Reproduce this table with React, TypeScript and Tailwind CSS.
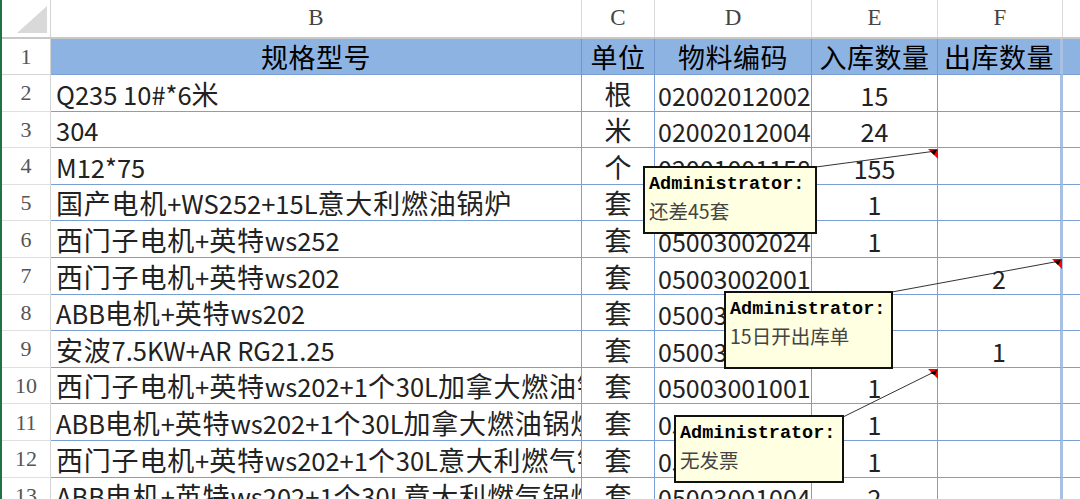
const rows: { b: string; c: string; d: string; e: string; f: string }[] = [
  { b: "Q235 10#*6米", c: "根", d: "02002012002", e: "15", f: "" },
  { b: "304", c: "米", d: "02002012004", e: "24", f: "" },
  { b: "M12*75", c: "个", d: "02001001158", e: "155", f: "" },
  { b: "国产电机+WS252+15L意大利燃油锅炉", c: "套", d: "05003002026", e: "1", f: "" },
  { b: "西门子电机+英特ws252", c: "套", d: "05003002024", e: "1", f: "" },
  { b: "西门子电机+英特ws202", c: "套", d: "05003002001", e: "", f: "2" },
  { b: "ABB电机+英特ws202", c: "套", d: "05003002003", e: "", f: "" },
  { b: "安波7.5KW+AR RG21.25", c: "套", d: "05003002040", e: "", f: "1" },
  { b: "西门子电机+英特ws202+1个30L加拿大燃油锅炉", c: "套", d: "05003001001", e: "1", f: "" },
  { b: "ABB电机+英特ws202+1个30L加拿大燃油锅炉", c: "套", d: "05003001002", e: "1", f: "" },
  { b: "西门子电机+英特ws202+1个30L意大利燃气锅炉", c: "套", d: "05003001003", e: "1", f: "" },
  { b: "ABB电机+英特ws202+1个30L意大利燃气锅炉", c: "套", d: "05003001004", e: "2", f: "" },
];

const cols = ["B", "C", "D", "E", "F"];
const widths = ["w-[531px]", "w-[73px]", "w-[157px]", "w-[126px]", "w-[125px]"];

// CJK runs are set a bit wider, like the sheet's font
function Mixed({ text }: { text: string }) {
  const parts = text.split(/([\u4e00-\u9fff]+)/).filter(Boolean);
  return (
    <>
      {parts.map((p, i) =>
        /[\u4e00-\u9fff]/.test(p) ? (
          <span key={i} className="text-[27px] tracking-[0.8px]">
            {p}
          </span>
        ) : (
          <span key={i}>{p}</span>
        )
      )}
    </>
  );
}

function Comment({ pos, note }: { pos: string; note: string }) {
  return (
    <div className={`absolute ${pos} bg-[#ffffe1] border-2 border-[#111] px-[4px] pt-[4px]`}>
      <div className="font-['Liberation_Mono',monospace] font-bold text-[18.5px] leading-[26px] text-black">
        Administrator:
      </div>
      <div className="font-['Noto_Sans_CJK_SC',sans-serif] text-[19.5px] leading-[26px] text-[#444]">{note}</div>
    </div>
  );
}

export default function App() {
  return (
    <div className="relative flex w-[1080px] h-[499px] overflow-hidden bg-white">
      <div className="w-[2px] shrink-0 bg-[#217346]" />
      <div className="flex flex-col flex-1 font-['Noto_Sans_CJK_SC','Noto_Sans',sans-serif] text-[#222]">
        {/* column letters */}
        <div className="flex h-[39px] shrink-0 border-b-2 border-[#c8c8c8]">
          <div className="relative w-[49px] shrink-0 border-r border-[#d4d4d4]">
            <div className="absolute right-[3px] bottom-[4px] w-0 h-0 border-l-[30px] border-l-transparent border-b-[27px] border-b-[#d9d9d9]" />
          </div>
          {cols.map((c, i) => (
            <div
              key={c}
              className={`${widths[i]} shrink-0 flex items-center justify-center border-r border-[#dadada] font-['Liberation_Serif',serif] text-[23px] text-[#444]`}
            >
              {c}
            </div>
          ))}
          <div className="flex-1" />
        </div>

        {/* header row */}
        <div className="flex h-[36px] shrink-0">
          <div className="w-[49px] shrink-0 flex items-center justify-center border-r border-b border-[#d4d4d4] font-['Liberation_Serif',serif] text-[22px] text-[#555]">
            1
          </div>
          {["规格型号", "单位", "物料编码", "入库数量", "出库数量"].map((t, i) => (
            <div
              key={t}
              className={`${widths[i]} shrink-0 flex items-center justify-center bg-[#8db3e2] border-b border-[#7a9fd4] ${
                i === 4 ? "border-r-[3px] border-r-[#a8c0e4]" : "border-r border-r-[#6f96cf]"
              } text-[27px] leading-[30px] tracking-[0.5px] text-black whitespace-nowrap`}
            >
              {t}
            </div>
          ))}
          <div className="flex-1 bg-[#8db3e2] border-b border-[#7a9fd4]" />
        </div>

        {rows.map((r, idx) => (
          <div key={idx} className="flex h-[36.6px] shrink-0">
            <div className="w-[49px] shrink-0 flex items-center justify-center border-r border-b border-r-[#d4d4d4] border-b-[#e0e0e0] font-['Liberation_Serif',serif] text-[22px] text-[#555]">
              {idx + 2}
            </div>
            <div className="w-[531px] shrink-0 flex items-end pl-[5px] pb-[3px] border-r border-b border-[#7a9fd4] text-[25.5px] leading-none whitespace-nowrap overflow-hidden">
              <div className="leading-[28px]">
                <Mixed text={r.b} />
              </div>
            </div>
            <div className="w-[73px] shrink-0 flex items-end justify-center pb-[2px] border-r border-b border-[#7a9fd4] text-[27px] leading-[30px]">
              {r.c}
            </div>
            <div className="w-[157px] shrink-0 flex items-end pl-[3px] pb-[3px] border-r border-b border-[#7a9fd4] text-[25px] leading-none whitespace-nowrap overflow-hidden">
              {r.d}
            </div>
            <div className="w-[126px] shrink-0 flex items-end justify-center pb-[3px] border-r border-b border-[#7a9fd4] text-[25px] leading-none">
              {r.e}
            </div>
            <div className="w-[125px] shrink-0 flex items-end justify-center pb-[3px] border-r-[3px] border-r-[#a8c0e4] border-b border-b-[#7a9fd4] text-[25px] leading-none">
              {r.f}
            </div>
            <div className="flex-1 border-b border-[#7a9fd4]" />
          </div>
        ))}
      </div>

      {/* comment connectors */}
      <svg className="absolute inset-0 pointer-events-none" width="1080" height="499">
        <polygon points="928,149 938,149 938,159" fill="#ff0000" />
        <polygon points="1052,259 1062,259 1062,269" fill="#ff0000" />
        <polygon points="928,369 938,369 938,379" fill="#ff0000" />
        <line x1="816" y1="167" x2="936" y2="151" stroke="#333" strokeWidth="1" />
        <line x1="892" y1="292" x2="1060" y2="261" stroke="#333" strokeWidth="1" />
        <line x1="843" y1="417" x2="936" y2="371" stroke="#333" strokeWidth="1" />
        <polygon points="930,151 937,150 934,155" fill="#000" />
        <polygon points="1054,261 1061,260 1058,265" fill="#000" />
        <polygon points="930,373 937,370 935,375" fill="#000" />
      </svg>

      <Comment pos="left-[643px] top-[166px] w-[174px] h-[68px]" note="还差45套" />
      <Comment pos="left-[724px] top-[291px] w-[169px] h-[78px]" note="15日开出库单" />
      <Comment pos="left-[674px] top-[415px] w-[170px] h-[68px]" note="无发票" />
    </div>
  );
}
